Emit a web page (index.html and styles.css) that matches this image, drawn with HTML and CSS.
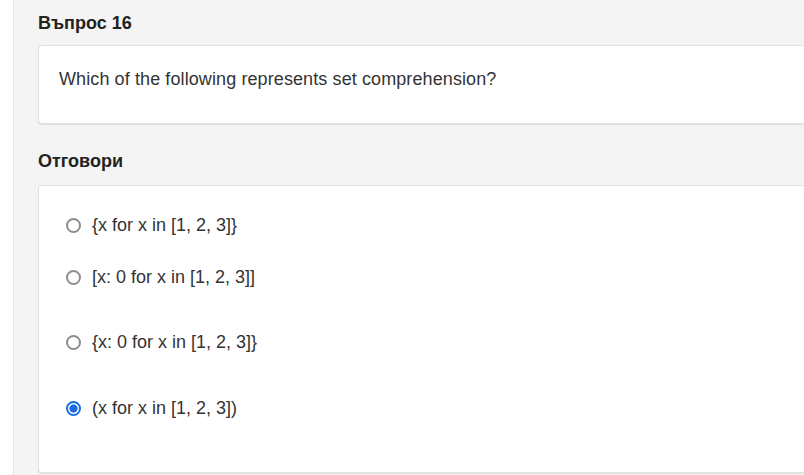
FILE: index.html
```html
<!DOCTYPE html>
<html>
<head>
<meta charset="utf-8">
<link rel="stylesheet" href="styles.css">
</head>
<body>
<div class="page">
  <div class="gutter"></div>
  <main class="main">
    <h2 class="title">Въпрос 16</h2>
    <div class="card question">
      <p class="qtext">Which of the following represents set comprehension?</p>
    </div>
    <h2 class="title answers-title">Отговори</h2>
    <div class="card answers">
      <label class="option opt1"><input type="radio" name="a"><span>{x for x in [1, 2, 3]}</span></label>
      <label class="option opt2"><input type="radio" name="a"><span>[x: 0 for x in [1, 2, 3]]</span></label>
      <label class="option opt3"><input type="radio" name="a"><span>{x: 0 for x in [1, 2, 3]}</span></label>
      <label class="option opt4"><input type="radio" name="a" checked><span>(x for x in [1, 2, 3])</span></label>
    </div>
  </main>
</div>
</body>
</html>
```
FILE: styles.css
```css
html, body {
  margin: 0;
  padding: 0;
  height: 100%;
  overflow: hidden;
}
body {
  font-family: "Liberation Sans", Arial, sans-serif;
  color: #333;
  background: #fff;
}
.page {
  display: flex;
  height: 100%;
}
.gutter {
  width: 13px;
  flex: none;
  background: #fff;
  border-right: 1px solid #e6e6e6;
}
.main {
  flex: 1;
  background: #f4f4f4;
  padding: 12px 0 0 24px;
  min-width: 0;
}
.title {
  margin: 0 0 11px;
  font-size: 18px;
  font-weight: bold;
  line-height: 22px;
  color: #222;
}
.answers-title {
  margin-bottom: 13px;
}
.card {
  background: #fff;
  border: 1px solid #e0e0e0;
  border-right: none;
  border-radius: 4px 0 0 4px;
  box-shadow: 0 1px 1px rgba(0,0,0,0.08);
}
.question {
  height: 77px;
  padding: 0 0 0 20px;
  margin-bottom: 26px;
}
.qtext {
  margin: 22px 0 0;
  font-size: 18px;
  line-height: 22px;
  letter-spacing: 0.1px;
  color: #333;
}
.answers {
  height: 286px;
  padding: 0 0 0 27px;
  display: flex;
  flex-direction: column;
}
.option {
  display: flex;
  align-items: center;
  font-size: 18px;
  line-height: 22px;
  color: #333;
  height: 22px;
}
.option input {
  appearance: none;
  -webkit-appearance: none;
  margin: 0 11px 0 0;
  width: 15px;
  height: 15px;
  box-sizing: border-box;
  border: 2px solid #8d8d8d;
  border-radius: 50%;
  background: #fff;
}
.option input:checked {
  border-color: #1a6ee0;
  background: radial-gradient(circle, #1a6ee0 0 3.8px, #fff 4.4px);
}
.opt1 { margin-top: 28px; }
.opt2 { margin-top: 30px; }
.opt3 { margin-top: 43px; }
.opt4 { margin-top: 44px; }
```
